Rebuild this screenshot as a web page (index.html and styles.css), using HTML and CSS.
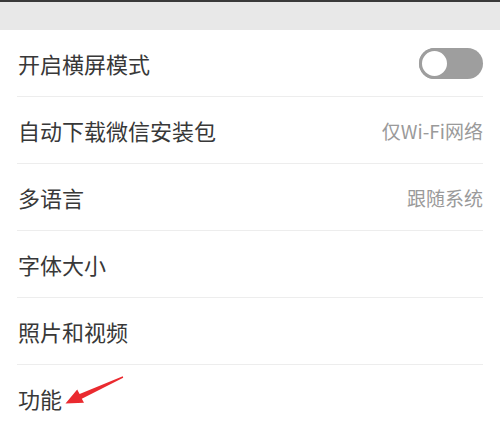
FILE: index.html
```html
<!DOCTYPE html>
<html lang="zh-CN">
<head>
<meta charset="utf-8">
<link rel="stylesheet" href="styles.css">
</head>
<body>
<div class="topbar"></div>
<ul class="list">
  <li class="row"><span class="label">开启横屏模式</span><span class="toggle"><span class="knob"></span></span></li>
  <li class="row"><span class="label">自动下载微信安装包</span><span class="value">仅Wi-Fi网络</span></li>
  <li class="row"><span class="label">多语言</span><span class="value">跟随系统</span></li>
  <li class="row"><span class="label">字体大小</span></li>
  <li class="row"><span class="label">照片和视频</span></li>
  <li class="row last"><span class="label">功能</span>
    <svg class="arrow" width="70" height="40" viewBox="0 0 70 40">
      <polygon points="66.8,3.3 23.6,21.1 21.2,16.5 9.5,30.5 28,29.8 25.8,25.7 67.2,4.7" fill="#ea2a2f"/>
    </svg>
  </li>
</ul>
</body>
</html>
```
FILE: styles.css
```css
html, body {
  margin: 0;
  padding: 0;
  background: #ffffff;
  font-family: "Noto Sans CJK SC", "Noto Sans", sans-serif;
}
.topbar {
  height: 28px;
  border-top: 2px solid #3a3a3a;
  background: #e8e8e8;
}
.list {
  list-style: none;
  margin: 0;
  padding: 0 17px;
}
.row {
  position: relative;
  display: flex;
  align-items: center;
  justify-content: space-between;
  height: 66px;
  border-bottom: 1px solid #ededed;
  padding-left: 1px;
}
.row.last {
  border-bottom: none;
}
.label {
  font-size: 22px;
  color: #383838;
  line-height: 1;
}
.value {
  font-size: 19px;
  color: #9a9a9a;
  line-height: 1;
}
.toggle {
  width: 64px;
  height: 31px;
  border-radius: 16px;
  background: #9e9e9e;
  display: flex;
  align-items: center;
}
.knob {
  width: 25px;
  height: 25px;
  border-radius: 50%;
  background: #ffffff;
  border: 3px solid #9e9e9e;
}
.arrow {
  position: absolute;
  left: 39px;
  top: 8px;
}
```
